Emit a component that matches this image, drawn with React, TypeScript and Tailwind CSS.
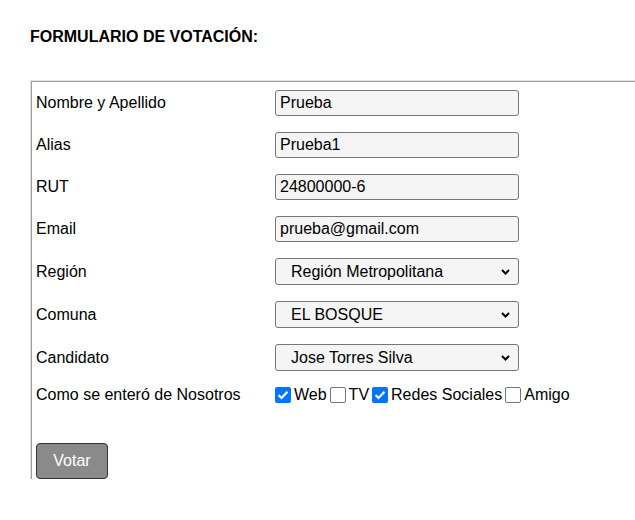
import React from "react";

function TextRow({ label, value }: { label: string; value: string }) {
  return (
    <div className="flex items-center h-[26px] mb-[16px]">
      <div className="w-[239px] leading-[18px]">{label}</div>
      <div className="w-[244px] h-[26px] border border-[#767676] rounded-[3px] bg-[#f5f5f5] flex items-center pl-[4px] leading-[18px]">
        {value}
      </div>
    </div>
  );
}

function SelectRow({ label, value, last }: { label: string; value: string; last?: boolean }) {
  return (
    <div className={"flex items-center h-[27px] " + (last ? "" : "mb-[16px]")}>
      <div className="w-[239px] leading-[18px]">{label}</div>
      <div className="w-[244px] h-[27px] border border-[#767676] rounded-[3px] bg-[#f5f5f5] flex items-center pl-[15px] pr-[8px] leading-[18px]">
        <span className="flex-1">{value}</span>
        <svg width="9" height="6" viewBox="0 0 9 6" className="mt-[1px]">
          <path d="M1 1 L4.5 4.5 L8 1" fill="none" stroke="#000" strokeWidth="2" />
        </svg>
      </div>
    </div>
  );
}

function Check({ checked, label, first }: { checked: boolean; label: string; first?: boolean }) {
  return (
    <div className="flex items-center">
      <span
        className={
          "w-4 h-4 rounded-[2px] flex items-center justify-center " +
          (first ? "ml-0 " : "ml-[3px] ") +
          (checked ? "bg-[#0075ff]" : "bg-white border border-[#767676]")
        }
      >
        {checked && (
          <svg width="12" height="10" viewBox="0 0 12 10">
            <path d="M1.5 5 L4.5 8 L10.5 1.8" fill="none" stroke="#fff" strokeWidth="2.2" />
          </svg>
        )}
      </span>
      <span className="ml-[3px] leading-[18px]">{label}</span>
    </div>
  );
}

export default function App() {
  return (
    <div className="font-['Liberation_Sans',Arial,sans-serif] text-[16px] text-black bg-white w-[635px] h-[520px] overflow-hidden">
      <h1 className="pt-[28px] pl-[30px] font-bold leading-[18px] text-[16px]">FORMULARIO DE VOTACIÓN:</h1>
      <div className="mt-[34px] ml-[30px] border-t border-l border-[#e4e4e4]">
        <div className="border-t border-l border-[#9c9c9c] pl-[4px] pt-[8px]">
          <TextRow label="Nombre y Apellido" value="Prueba" />
          <TextRow label="Alias" value="Prueba1" />
          <TextRow label="RUT" value="24800000-6" />
          <TextRow label="Email" value="prueba@gmail.com" />
          <SelectRow label="Región" value="Región Metropolitana" />
          <SelectRow label="Comuna" value="EL BOSQUE" />
          <SelectRow label="Candidato" value="Jose Torres Silva" last />
          <div className="flex items-center h-[26px] mt-[11px]">
            <div className="w-[239px] leading-[18px]">Como se enteró de Nosotros</div>
            <Check checked label="Web" first />
            <Check checked={false} label="TV" />
            <Check checked label="Redes Sociales" />
            <Check checked={false} label="Amigo" />
          </div>
          <button className="mt-[35px] w-[72px] h-[36px] bg-[#8a8a8a] text-white border border-[#333] rounded-[4px] leading-[18px] block">
            Votar
          </button>
        </div>
      </div>
    </div>
  );
}
